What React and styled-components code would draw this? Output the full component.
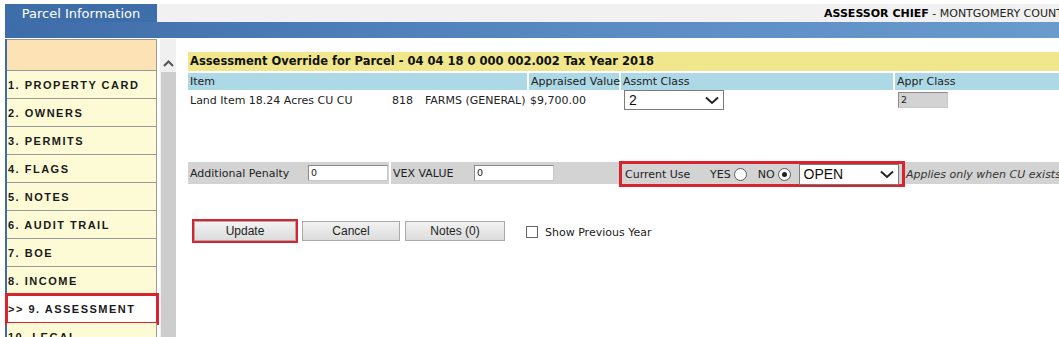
import React from "react";
import styled, { createGlobalStyle } from "styled-components";

const GlobalStyle = createGlobalStyle`
  html, body {
    margin: 0;
    padding: 0;
    background: #fff;
    overflow: hidden;
  }
  body {
    font-family: "DejaVu Sans", Verdana, sans-serif;
    font-size: 11px;
    color: #111;
  }
`;

const Page = styled.div`
  width: 1059px;
  height: 337px;
  padding: 4px 0 0 5px;
  box-sizing: border-box;
  overflow: hidden;
`;

const TopStrip = styled.div`
  display: flex;
  height: 18px;
`;

const Tab = styled.div`
  width: 152px;
  background: #3e6ea9;
  color: #fff;
  font-size: 13px;
  line-height: 19px;
  text-align: center;
`;

const UserBar = styled.div`
  flex: 1;
  background: #f1f1f1;
  white-space: nowrap;
  overflow: hidden;
  padding-left: 667px;
  line-height: 19px;
  font-size: 11px;
  color: #222;

  b {
    color: #000;
  }
`;

const BlueBar = styled.div`
  height: 16px;
  background: linear-gradient(to right, #3d6ca8 0%, #5a8ac2 55%, #6a9bcd 100%);
`;

const Body = styled.div`
  display: flex;
  align-items: flex-start;
  padding-top: 1px;
`;

const Sidebar = styled.div`
  width: 150px;
  border-left: 2px solid #3d6ca8;
  background: #fdfbd6;
  flex-shrink: 0;
  height: 300px;
`;

const SideHead = styled.div`
  height: 30px;
  background: #fde2b6;
  border: 1px solid #9a9a9a;
  border-left: none;
`;

const SideItem = styled.div`
  height: 27px;
  line-height: 28px;
  border-right: 1px solid #9a9a9a;
  border-bottom: 1px solid #9a9a9a;
  padding-left: 1px;
  font-family: "Liberation Sans", Arial, sans-serif;
  font-weight: bold;
  font-size: 11px;
  letter-spacing: 1.5px;
  color: #1a1a1a;
  white-space: nowrap;
  overflow: hidden;
  background: ${(p) => (p.$active ? "#fff" : "#fdfbd6")};
  outline: ${(p) => (p.$active ? "3px solid #d9232e" : "none")};
  outline-offset: ${(p) => (p.$active ? "-1px" : "0")};
  position: relative;
`;

const Scroll = styled.div`
  width: 16px;
  margin-left: 3px;
  height: 300px;
  background: #f0f0f0;
  display: flex;
  flex-direction: column;
  align-items: center;
  flex-shrink: 0;
`;

const ScrollArrow = styled.div`
  height: 33px;
  display: flex;
  align-items: flex-end;
  justify-content: center;
  padding-bottom: 5px;
  box-sizing: border-box;
`;

const Thumb = styled.div`
  width: 15px;
  flex: 1;
  background: #cdcdcd;
`;

const Content = styled.div`
  flex: 1;
  margin-left: 12px;
  padding-top: 13px;
  min-width: 0;
`;

const Title = styled.div`
  height: 19px;
  line-height: 19px;
  background: #f0e68c;
  font-weight: bold;
  font-size: 11.5px;
  padding-left: 2px;
  white-space: nowrap;
`;

const HeadRow = styled.div`
  display: grid;
  grid-template-columns: 339px 90px 272px 1fr;
  column-gap: 2px;
  margin-top: 2px;
`;

const HeadCell = styled.div`
  background: #add8e6;
  height: 17px;
  line-height: 18px;
  padding-left: 2px;
  color: #222;
  white-space: nowrap;
`;

const DataRow = styled.div`
  display: grid;
  grid-template-columns: 202px 33px 105px 94px 274px 1fr;
  align-items: center;
  padding-left: 2px;
  height: 22px;
  margin-top: -1px;
  white-space: nowrap;
  color: #222;
`;

const SelectBox = styled.div`
  position: relative;
  width: ${(p) => p.$w}px;
  height: 20px;
  box-sizing: border-box;
  border: 1px solid #7a7a7a;
  background: #fff;
  font-family: "Liberation Sans", Arial, sans-serif;
  font-size: 14px;
  line-height: 18px;
  padding-left: 4px;
  color: #111;
`;

const Chevron = styled.svg`
  position: absolute;
  right: 4px;
  top: 5px;
`;

const GrayInput = styled.div`
  width: 50px;
  height: 16px;
  box-sizing: border-box;
  border: 1px solid #8a8a8a;
  border-right-color: #c8c8c8;
  border-bottom-color: #c8c8c8;
  background: #d3d3d3;
  font-size: 9.5px;
  line-height: 14px;
  padding-left: 2px;
`;

const OptionBar = styled.div`
  display: flex;
  align-items: center;
  margin-top: 51px;
  height: 22px;
`;

const OptCell = styled.div`
  display: flex;
  align-items: center;
  height: 22px;
  background: #d3d3d3;
  width: ${(p) => (p.$w ? `${p.$w}px` : "auto")};
  flex: ${(p) => (p.$grow ? 1 : "none")};
  margin-left: ${(p) => p.$ml || 0}px;
  padding-left: ${(p) => (p.$grow ? 0 : 2)}px;
  box-sizing: border-box;
  white-space: nowrap;
  color: #222;
`;

const Label = styled.span`
  width: ${(p) => p.$w}px;
  flex-shrink: 0;
`;

const TextInput = styled.div`
  width: 80px;
  height: 16px;
  box-sizing: border-box;
  border: 1px solid #8a8a8a;
  border-right-color: #c8c8c8;
  border-bottom-color: #c8c8c8;
  background: #fff;
  font-size: 9.5px;
  line-height: 14px;
  padding-left: 2px;
`;

const CurrentUse = styled.div`
  display: flex;
  align-items: center;
  height: 26px;
  box-sizing: border-box;
  border: 3px solid #d9232e;
  width: 286px;
  padding-left: 3px;
  margin-top: 2px;
`;

const RadioLabel = styled.span`
  margin-left: ${(p) => p.$ml || 0}px;
`;

const Radio = styled.span`
  display: inline-block;
  width: 11px;
  height: 11px;
  border-radius: 50%;
  border: 1px solid #5a5a5a;
  background: #fff;
  margin: 0 0 0 3px;
  position: relative;

  &::after {
    content: "";
    display: ${(p) => (p.$checked ? "block" : "none")};
    position: absolute;
    left: 3px;
    top: 3px;
    width: 5px;
    height: 5px;
    border-radius: 50%;
    background: #222;
  }
`;

const CuSelect = styled(SelectBox)`
  margin-left: 8px;
  height: 21px;
`;

const Note = styled.span`
  font-style: italic;
  color: #333;
  margin-left: 1px;
  margin-top: 2px;
  white-space: nowrap;
`;

const ButtonRow = styled.div`
  display: flex;
  align-items: center;
  margin-top: 37px;
  padding-left: 6px;
`;

const Button = styled.button`
  width: ${(p) => p.$w}px;
  height: 20px;
  margin-right: ${(p) => p.$gap}px;
  border: 1px solid #a9a9a9;
  background: linear-gradient(#f2f2f2, #dcdcdc);
  font-family: "Liberation Sans", Arial, sans-serif;
  font-size: 12px;
  color: #222;
  padding: 0;
  outline: ${(p) => (p.$marked ? "2px solid #d9232e" : "none")};
  outline-offset: 0;
`;

const Check = styled.span`
  display: inline-block;
  width: 12px;
  height: 12px;
  box-sizing: border-box;
  border: 1px solid #666;
  background: #fff;
  margin: 2px 7px 0 21px;
`;

const CheckLabel = styled.span`
  margin-top: 3px;
  color: #222;
`;

const items = [
  "1. PROPERTY CARD",
  "2. OWNERS",
  "3. PERMITS",
  "4. FLAGS",
  "5. NOTES",
  "6. AUDIT TRAIL",
  "7. BOE",
  "8. INCOME",
  ">> 9. ASSESSMENT",
  "10. LEGAL",
];

const Down = () => (
  <Chevron width="14" height="9" viewBox="0 0 14 9">
    <path d="M1 1.5 L7 7 L13 1.5" fill="none" stroke="#222" strokeWidth="2" />
  </Chevron>
);

export default function App() {
  return (
    <>
      <GlobalStyle />
      <Page>
        <TopStrip>
          <Tab>Parcel Information</Tab>
          <UserBar>
            <b>ASSESSOR CHIEF</b> - MONTGOMERY COUNTY
          </UserBar>
        </TopStrip>
        <BlueBar />
        <Body>
          <Sidebar>
            <SideHead />
            {items.map((t) => (
              <SideItem key={t} $active={t.startsWith(">>")}>
                {t}
              </SideItem>
            ))}
          </Sidebar>
          <Scroll>
            <ScrollArrow>
              <svg width="11" height="7" viewBox="0 0 11 7">
                <path d="M1 6 L5.5 1.5 L10 6" fill="none" stroke="#555" strokeWidth="2" />
              </svg>
            </ScrollArrow>
            <Thumb />
          </Scroll>
          <Content>
            <Title>Assessment Override for Parcel - 04 04 18 0 000 002.002 Tax Year 2018</Title>
            <HeadRow>
              <HeadCell>Item</HeadCell>
              <HeadCell>Appraised Value</HeadCell>
              <HeadCell>Assmt Class</HeadCell>
              <HeadCell>Appr Class</HeadCell>
            </HeadRow>
            <DataRow>
              <span>Land Item 18.24 Acres CU CU</span>
              <span>818</span>
              <span>FARMS (GENERAL)</span>
              <span>$9,700.00</span>
              <SelectBox $w={100}>
                2
                <Down />
              </SelectBox>
              <GrayInput>2</GrayInput>
            </DataRow>
            <OptionBar>
              <OptCell $w={201}>
                <Label $w={118}>Additional Penalty</Label>
                <TextInput>0</TextInput>
              </OptCell>
              <OptCell $w={228} $ml={2}>
                <Label $w={81}>VEX VALUE</Label>
                <TextInput>0</TextInput>
              </OptCell>
              <OptCell $grow>
                <CurrentUse>
                  <Label $w={85}>Current Use</Label>
                  <RadioLabel>YES</RadioLabel>
                  <Radio />
                  <RadioLabel $ml={11}>NO</RadioLabel>
                  <Radio $checked />
                  <CuSelect $w={100}>
                    OPEN
                    <Down />
                  </CuSelect>
                </CurrentUse>
                <Note>Applies only when CU exists</Note>
              </OptCell>
            </OptionBar>
            <ButtonRow>
              <Button $w={102} $gap={6} $marked>
                Update
              </Button>
              <Button $w={98} $gap={5}>
                Cancel
              </Button>
              <Button $w={100} $gap={0}>
                Notes (0)
              </Button>
              <Check />
              <CheckLabel>Show Previous Year</CheckLabel>
            </ButtonRow>
          </Content>
        </Body>
      </Page>
    </>
  );
}
